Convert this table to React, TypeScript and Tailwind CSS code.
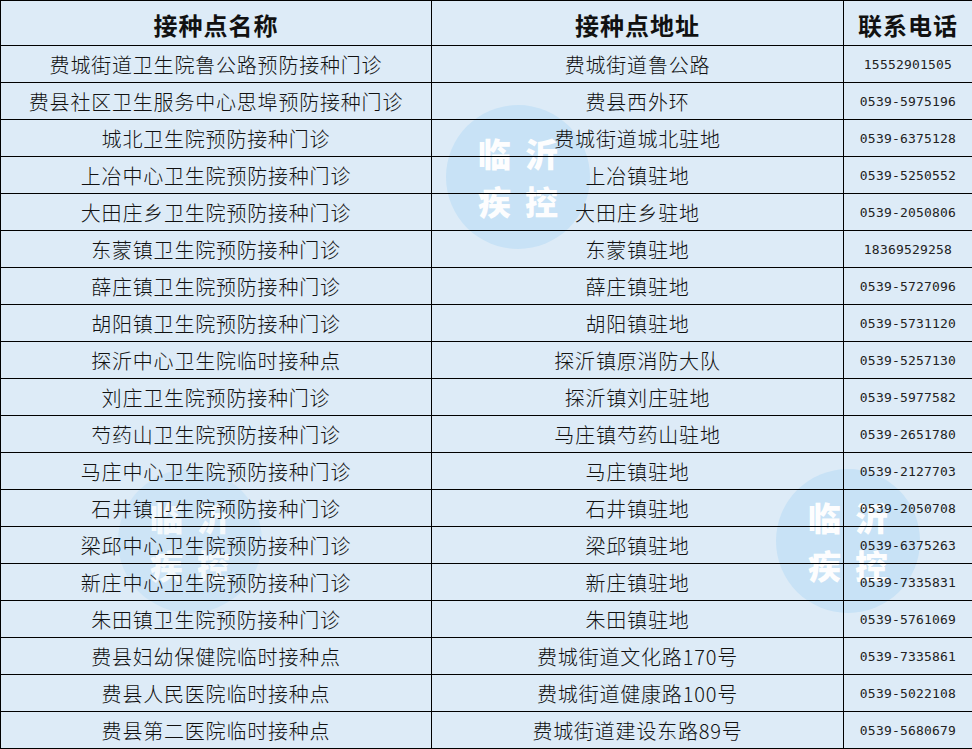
import React from "react";

const rows: [string, string, string][] = [
  ["费城街道卫生院鲁公路预防接种门诊", "费城街道鲁公路", "15552901505"],
  ["费县社区卫生服务中心思埠预防接种门诊", "费县西外环", "0539-5975196"],
  ["城北卫生院预防接种门诊", "费城街道城北驻地", "0539-6375128"],
  ["上冶中心卫生院预防接种门诊", "上冶镇驻地", "0539-5250552"],
  ["大田庄乡卫生院预防接种门诊", "大田庄乡驻地", "0539-2050806"],
  ["东蒙镇卫生院预防接种门诊", "东蒙镇驻地", "18369529258"],
  ["薛庄镇卫生院预防接种门诊", "薛庄镇驻地", "0539-5727096"],
  ["胡阳镇卫生院预防接种门诊", "胡阳镇驻地", "0539-5731120"],
  ["探沂中心卫生院临时接种点", "探沂镇原消防大队", "0539-5257130"],
  ["刘庄卫生院预防接种门诊", "探沂镇刘庄驻地", "0539-5977582"],
  ["芍药山卫生院预防接种门诊", "马庄镇芍药山驻地", "0539-2651780"],
  ["马庄中心卫生院预防接种门诊", "马庄镇驻地", "0539-2127703"],
  ["石井镇卫生院预防接种门诊", "石井镇驻地", "0539-2050708"],
  ["梁邱中心卫生院预防接种门诊", "梁邱镇驻地", "0539-6375263"],
  ["新庄中心卫生院预防接种门诊", "新庄镇驻地", "0539-7335831"],
  ["朱田镇卫生院预防接种门诊", "朱田镇驻地", "0539-5761069"],
  ["费县妇幼保健院临时接种点", "费城街道文化路170号", "0539-7335861"],
  ["费县人民医院临时接种点", "费城街道健康路100号", "0539-5022108"],
  ["费县第二医院临时接种点", "费城街道建设东路89号", "0539-5680679"],
];

const cjk = { fontFamily: '"Noto Sans CJK SC", "Noto Sans", sans-serif' };
const mono = { fontFamily: '"DejaVu Sans Mono", "Liberation Mono", monospace' };

function Watermark({ className }: { className: string }) {
  return (
    <div
      className={`absolute w-[144px] h-[144px] rounded-full bg-[#c7e2f6] flex flex-col items-center justify-center text-white font-black text-[33px] leading-[48px] tracking-[14px] pl-[14px] ${className}`}
      style={cjk}
    >
      <div>临沂</div>
      <div>疾控</div>
    </div>
  );
}

export default function App() {
  return (
    <div className="relative w-[972px] h-[749px] bg-[#ddebf7] overflow-hidden text-[#111]" style={cjk}>
      <Watermark className="left-[446px] top-[105px] opacity-95" />
      <Watermark className="left-[776px] top-[469px] opacity-95" />
      <Watermark className="left-[118px] top-[469px] opacity-70" />
      <table className="relative table-fixed border-collapse w-[972px]">
        <colgroup>
          <col className="w-[431px]" />
          <col className="w-[412px]" />
          <col className="w-[129px]" />
        </colgroup>
        <thead>
          <tr className="h-[45px]">
            <th className="border border-black text-center font-bold text-[24px] tracking-[1px] p-0 pt-[3px]">接种点名称</th>
            <th className="border border-black text-center font-bold text-[24px] tracking-[1px] p-0 pt-[3px]">接种点地址</th>
            <th className="border border-black text-center font-bold text-[24px] tracking-[1px] p-0 pt-[3px]">联系电话</th>
          </tr>
        </thead>
        <tbody>
          {rows.map((r, i) => (
            <tr key={i} className="h-[37px]">
              <td className="border border-black text-center text-[20px] font-light tracking-[0.8px] p-0 pt-[2px] leading-[24px]">{r[0]}</td>
              <td className="border border-black text-center text-[20px] font-light tracking-[0.8px] p-0 pt-[2px] leading-[24px]">{r[1]}</td>
              <td className="border border-black text-center text-[13px] tracking-[0.2px] text-[#222] p-0 pt-[2px] leading-[24px]" style={mono}>{r[2]}</td>
            </tr>
          ))}
        </tbody>
      </table>
    </div>
  );
}
